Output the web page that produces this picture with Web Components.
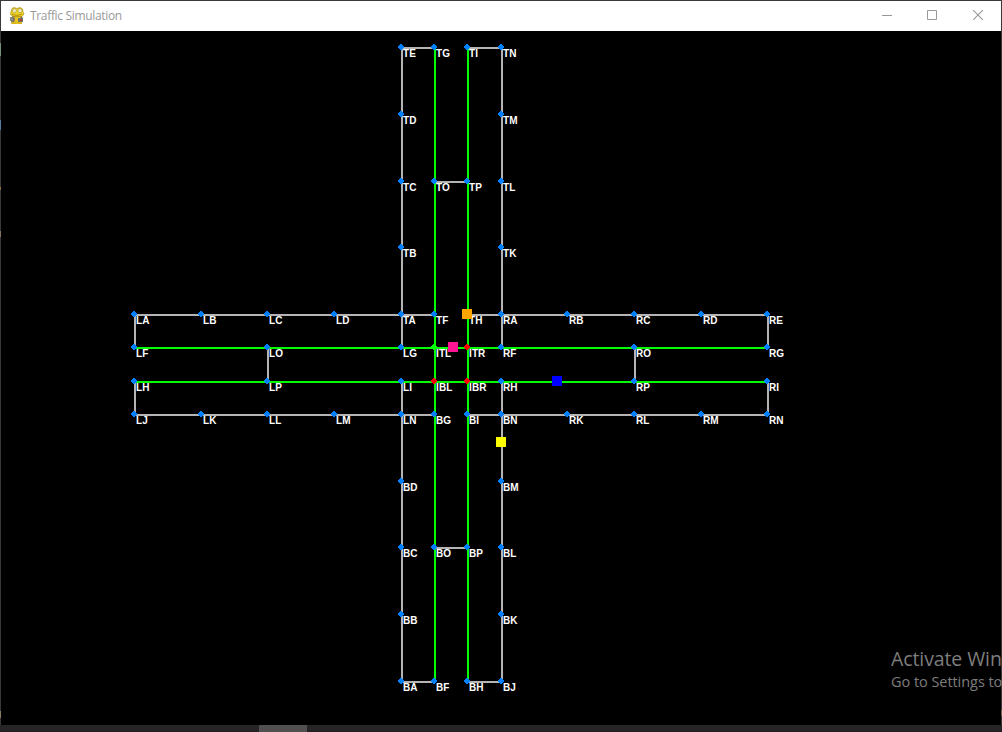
<!DOCTYPE html>
<html lang="en">
<head>
<meta charset="utf-8">
<title>Traffic Simulation</title>
<style>
html,body{margin:0;height:100%;background:#000;overflow:hidden}
body{font-family:"Open Sans","Noto Sans",sans-serif}
</style>
</head>
<body>
<desktop-screen>
  <app-window>
    <title-bar slot="bar">Traffic Simulation</title-bar>
    <road-network></road-network>
  </app-window>
  <task-bar slot="taskbar"></task-bar>
  <activation-notice slot="overlay"><span slot="title">Activate Win</span><span>Go to Settings to</span></activation-notice>
</desktop-screen>
<script>
const define = (name, html, setup) => customElements.define(name, class extends HTMLElement {
  constructor() {
    super();
    this.attachShadow({mode: 'open'}).innerHTML = html;
    if (setup) setup(this.shadowRoot);
  }
});

define('desktop-screen', `<style>
:host{display:flex;flex-direction:column;width:1002px;height:732px;position:relative;overflow:hidden}
</style><slot></slot><slot name="taskbar"></slot><slot name="overlay"></slot>`);

define('app-window', `<style>
:host{display:flex;flex-direction:column;height:725px;box-sizing:border-box;border:1px solid #393939;border-bottom:0;background:#000;position:relative}
i{position:absolute;left:-1px;width:1px}
</style><slot name="bar"></slot><slot></slot>
<i style="top:42px;height:13px;background:#75917b"></i>
<i style="top:119px;height:10px;background:#527b9b"></i>
<i style="top:186px;height:3px;background:#8b6d42"></i>
<i style="top:230px;height:6px;background:#84765c"></i>
<i style="top:710px;height:7px;background:#8b7962"></i>
<i style="top:709px;left:1000px;height:6px;background:#706142"></i>`);

define('title-bar', `<style>
:host{display:flex;align-items:center;height:30px;flex:none;background:#fff;color:#999;font-size:12px;line-height:30px}
.logo{margin:0 5px 0 8px;flex:none}
.name{flex:1;white-space:nowrap;letter-spacing:-.33px}
.btn{width:46px;height:28px;padding-bottom:2px;display:flex;align-items:center;justify-content:center}
.min{width:44px}
svg{display:block}
</style>
<svg class="logo" width="16" height="18" viewBox="0 0 16 18">
<path d="M4 8h8l2 3-1 5-3 1H4l-2-2V11z" fill="#7d7461"/>
<path d="M5 8h6l1 6-3 3H4l2-4z" fill="#e5c51d"/>
<path d="M3 1.5 5 .5l3 1 3-1 2.5 1.5.5 3 1 2-2 2.5H4L1.500 7.500 2 5z" fill="#efd323" stroke="#aa8c13" stroke-width=".7"/>
<circle cx="5.500" cy="3.700" r="2" fill="#eee9c8" stroke="#a99836" stroke-width=".6"/>
<circle cx="11" cy="3.700" r="2" fill="#eee9c8" stroke="#a99836" stroke-width=".6"/>
<path d="M3 7.500q5 2 10-.3" fill="none" stroke="#b28d10"/>
<path d="M1 10h3v4H1z" fill="#8b8a83"/><path d="M9 11h5v4H9z" fill="#777269"/><path d="M11 12h2v2h-2z" fill="#a74636"/>
<path d="M3 15h4v2H2z" fill="#ddb717"/><path d="M9 15h4v2H8z" fill="#dcb51b"/>
</svg>
<span class="name"><slot></slot></span>
<span class="btn min"><svg width="10" height="10"><path d="M0 5.500h10" stroke="#999"/></svg></span>
<span class="btn"><svg width="10" height="10"><path d="M.5.500h9v9h-9z" fill="none" stroke="#999"/></svg></span>
<span class="btn"><svg width="10" height="10"><path d="M0 0l10 10M10 0L0 10" stroke="#999" stroke-width="1.100"/></svg></span>`);

define('road-network', `<style>
:host{display:block;width:1000px;height:694px;flex:none}
svg{display:block}
text{font:bold 10px "Liberation Sans",Arial,sans-serif;fill:#fff;letter-spacing:.1px}
</style><svg width="1000" height="694" viewBox="1 31 1000 694" shape-rendering="crispEdges"></svg>`, root => {
  const svg = root.querySelector('svg');
  const X = [134,201,267,334,401,434,467,501,567,634,701,767];
  const Y = [47,114,181,247,314,347,381,414,481,547,614,681];
  const grey = [[4,0,5,0],[6,0,7,0],[5,2,6,2],[0,4,5,4],[6,4,11,4],[0,7,5,7],[6,7,11,7],[5,9,6,9],[4,11,5,11],[6,11,7,11],
    [4,0,4,5],[7,0,7,5],[4,6,4,11],[7,6,7,11],[0,4,0,5],[0,6,0,7],[11,4,11,5],[11,6,11,7],[2,5,2,6],[9,5,9,6]];
  const green = [[0,5,11,5],[0,6,11,6],[5,0,5,11],[6,0,6,11]];
  const road = color => ([a,b,c,d]) =>
    `<rect x="${X[a]}" y="${Y[b]}" width="${Math.max(2, X[c]-X[a])}" height="${Math.max(2, Y[d]-Y[b])}" fill="${color}"/>`;
  const rows = {
    0:'4TE 5TG 6TI 7TN', 1:'4TD 7TM', 2:'4TC 5TO 6TP 7TL', 3:'4TB 7TK',
    4:'0LA 1LB 2LC 3LD 4TA 5TF 6TH 7RA 8RB 9RC 10RD 11RE',
    5:'0LF 2LO 4LG 5ITL 6ITR 7RF 9RO 11RG', 6:'0LH 2LP 4LI 5IBL 6IBR 7RH 9RP 11RI',
    7:'0LJ 1LK 2LL 3LM 4LN 5BG 6BI 7BN 8RK 9RL 10RM 11RN',
    8:'4BD 7BM', 9:'4BC 5BO 6BP 7BL', 10:'4BB 7BK', 11:'4BA 5BF 6BH 7BJ'
  };
  let nodes = '';
  for (const r in rows) for (const item of rows[r].split(' ')) {
    const [, c, name] = item.match(/(\d+)(\w+)/);
    const x = X[c], y = Y[r];
    const color = name === 'ITL' ? '#00ff00' : /^I[TB]/.test(name) ? '#ff0000' : '#007fff';
    nodes += `<path d="M${x-1} ${y-3}h2v1h1v1h1v2h-1v1h-1v1h-2v-1h-1v-1h-1v-2h1v-1h1z" fill="${color}"/><text x="${x+2}" y="${y+10}">${name}</text>`;
  }
  const cars = [[448,342,'#ff1493'],[462,309,'#ffa500'],[552,376,'#0000ff'],[496,437,'#ffff00']]
    .map(([x,y,c]) => `<rect x="${x}" y="${y}" width="10" height="10" fill="${c}"/>`).join('');
  svg.innerHTML = grey.map(road('#b4b4b4')).join('') + green.map(road('#00ff00')).join('') + nodes + cars;
});

define('task-bar', `<style>
:host{display:flex;height:7px;box-sizing:border-box;background:#252525;border-bottom:1px solid #231b20;padding-left:259px}
span{width:48px;height:7px;background:#505050}
</style><span></span>`);

define('activation-notice', `<style>
:host{position:absolute;left:891px;top:646px;width:111px;overflow:hidden;white-space:nowrap;color:#7d7d7d;display:flex;flex-direction:column}
.t{font-size:19.5px;line-height:26px;letter-spacing:-.1px}
.s{font-size:14.5px;line-height:20px;letter-spacing:-.05px}
</style><div class="t"><slot name="title"></slot></div><div class="s"><slot></slot></div>`);
</script>
</body>
</html>
